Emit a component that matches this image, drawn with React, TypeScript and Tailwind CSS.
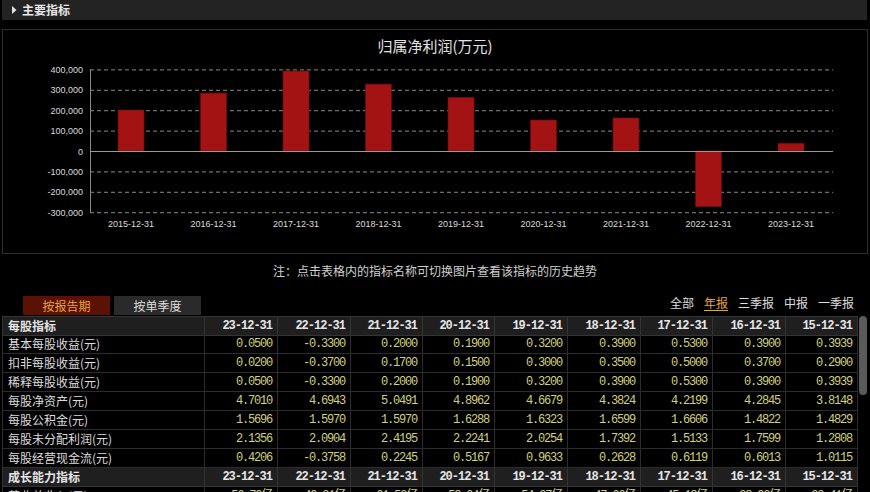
import React from "react";

const cjk = '"Noto Sans CJK SC", "Noto Sans", sans-serif';
const mono = '"Liberation Mono", "Noto Sans CJK SC", monospace';

const years = ["2015-12-31","2016-12-31","2017-12-31","2018-12-31","2019-12-31","2020-12-31","2021-12-31","2022-12-31","2023-12-31"];
const vals = [201000, 284000, 392000, 328000, 263000, 152000, 162000, -273000, 38000];
const yOf = (v: number) => 151 - (v / 100000) * 20.4;
const ticks = [400000, 300000, 200000, 100000, 0, -100000, -200000, -300000];
const fmt = (v: number) => (v === 0 ? "0" : (v < 0 ? "-" : "") + Math.abs(v).toLocaleString("en-US"));

function Chart() {
  return (
    <svg width={864} height={223} viewBox="3 30 864 223" className="block">
      <text x={435} y={52} textAnchor="middle" fill="#e2e2e2" fontSize={15} fontFamily={cjk}>归属净利润(万元)</text>
      {ticks.map((t) => (
        <g key={t}>
          {t !== 0 && (
            <line x1={90} x2={833} y1={yOf(t) + 0.5} y2={yOf(t) + 0.5} stroke="#8a8a8a" strokeWidth={1} strokeDasharray="4 3" />
          )}
          <text x={83} y={yOf(t) + 3.5} textAnchor="end" fill="#dcdcdc" fontSize={9} fontFamily='"Liberation Sans", sans-serif'>{fmt(t)}</text>
        </g>
      ))}
      <line x1={90.5} x2={90.5} y1={69} y2={213} stroke="#8a8a8a" strokeWidth={1} />
      {vals.map((v, i) => {
        const cx = 131 + 82.5 * i;
        const y0 = yOf(0);
        const yv = yOf(v);
        const top = Math.min(y0, yv);
        const h = Math.abs(y0 - yv);
        return <rect key={i} x={cx - 13} y={top} width={26} height={h} fill="#a31313" stroke="#6e0a0a" strokeWidth={0.6} />;
      })}
      <line x1={90} x2={833} y1={151.5} y2={151.5} stroke="#9a9a9a" strokeWidth={1} />
      {years.map((y, i) => (
        <text key={y} x={131 + 82.5 * i} y={226.5} textAnchor="middle" fill="#dcdcdc" fontSize={9} fontFamily='"Liberation Sans", sans-serif'>{y}</text>
      ))}
    </svg>
  );
}

const dates = ["23-12-31","22-12-31","21-12-31","20-12-31","19-12-31","18-12-31","17-12-31","16-12-31","15-12-31"];

const rows: [string, string[]][] = [
  ["基本每股收益(元)", ["0.0500","-0.3300","0.2000","0.1900","0.3200","0.3900","0.5300","0.3900","0.3939"]],
  ["扣非每股收益(元)", ["0.0200","-0.3700","0.1700","0.1500","0.3000","0.3500","0.5000","0.3700","0.2900"]],
  ["稀释每股收益(元)", ["0.0500","-0.3300","0.2000","0.1900","0.3200","0.3900","0.5300","0.3900","0.3939"]],
  ["每股净资产(元)", ["4.7010","4.6943","5.0491","4.8962","4.6679","4.3824","4.2199","4.2845","3.8148"]],
  ["每股公积金(元)", ["1.5696","1.5970","1.5970","1.6288","1.6323","1.6599","1.6606","1.4822","1.4829"]],
  ["每股未分配利润(元)", ["2.1356","2.0904","2.4195","2.2241","2.0254","1.7392","1.5133","1.7599","1.2808"]],
  ["每股经营现金流(元)", ["0.4206","-0.3758","0.2245","0.5167","0.9633","0.2628","0.6119","0.6013","1.0115"]],
  ["营业总收入(元)", ["56.79亿","49.31亿","61.52亿","58.04亿","54.27亿","47.66亿","45.18亿","38.92亿","33.41亿"]],
];

const rowGrid = "grid grid-cols-[203px_73px_73px_72px_72px_73px_73px_72px_73px_72px] h-[19px]";

function HeaderRow({ label, first }: { label: string; first?: boolean }) {
  return (
    <div className={`${rowGrid} bg-[#1f1f1f] ${first ? "border-t border-[#343434]" : ""}`}>
      <div className="border-l border-r border-b border-[#343434] pl-[5px] text-[12px] font-bold text-[#e6e6e6] leading-[18px]">{label}</div>
      {dates.map((d) => (
        <div key={d} className="border-r border-b border-[#343434] pr-[5px] text-right text-[12px] font-bold text-[#e6e6e6] tracking-[-1px] leading-[18px]" style={{ fontFamily: mono }}>{d}</div>
      ))}
    </div>
  );
}

function DataRow({ label, v }: { label: string; v: string[] }) {
  return (
    <div className={rowGrid}>
      <div className="border-l border-r border-b border-[#2c2c2c] pl-[5px] text-[12px] text-[#dcdcdc] leading-[18px] whitespace-nowrap">{label}</div>
      {v.map((x, i) => (
        <div key={i} className="border-r border-b border-[#2c2c2c] pr-[5px] text-right text-[12px] text-[#d2d27a] tracking-[-1.2px] leading-[18px] whitespace-nowrap" style={{ fontFamily: mono }}>{x}</div>
      ))}
    </div>
  );
}

export default function App() {
  return (
    <div className="w-[870px] h-[492px] overflow-hidden bg-black" style={{ fontFamily: cjk }}>
      <div className="pl-[2px]">
        <div className="h-[20px] w-[865px] bg-[#232323] flex items-center">
          <svg width={5} height={8} viewBox="0 0 5 8" className="ml-[10px]">
            <polygon points="0,0 4.5,4 0,8" fill="#e0e0e0" />
          </svg>
          <span className="ml-[5px] text-[12px] font-bold text-[#e8e8e8] leading-[20px]">主要指标</span>
        </div>
        <div className="mt-[9px] w-[866px] h-[225px] border border-[#2e2e2e]">
          <Chart />
        </div>
        <div className="h-[34px] w-[866px] flex items-center justify-center text-[12px] text-[#d0d0d0]">
          注：点击表格内的指标名称可切换图片查看该指标的历史趋势
        </div>
        <div className="mt-[8px] w-[856px] h-[20px] flex justify-between">
          <div className="flex items-start gap-[4px] ml-[21px]">
            <div className="w-[87px] h-[19px] bg-[#5a1204] text-[#e8a33a] text-[12px] flex items-center justify-center">按报告期</div>
            <div className="w-[87px] h-[19px] bg-[#2a2a2a] text-[#dedede] text-[12px] flex items-center justify-center">按单季度</div>
          </div>
          <div className="flex items-start gap-[10px] pr-[4px] text-[12px] leading-[13px] text-[#dedede]">
            <span>全部</span>
            <span className="text-[#e8a33a] underline underline-offset-2">年报</span>
            <span>三季报</span>
            <span>中报</span>
            <span>一季报</span>
          </div>
        </div>
        <div className="flex">
          <div className="w-[856px]">
            <HeaderRow label="每股指标" first />
            {rows.slice(0, 7).map(([label, v]) => (
              <DataRow key={label} label={label} v={v} />
            ))}
            <HeaderRow label="成长能力指标" />
            <DataRow label={rows[7][0]} v={rows[7][1]} />
          </div>
          <div className="ml-[1px] w-[8px]">
            <div className="h-[79px] w-[8px] rounded-full bg-[#5a5a5a]" />
          </div>
        </div>
      </div>
    </div>
  );
}
